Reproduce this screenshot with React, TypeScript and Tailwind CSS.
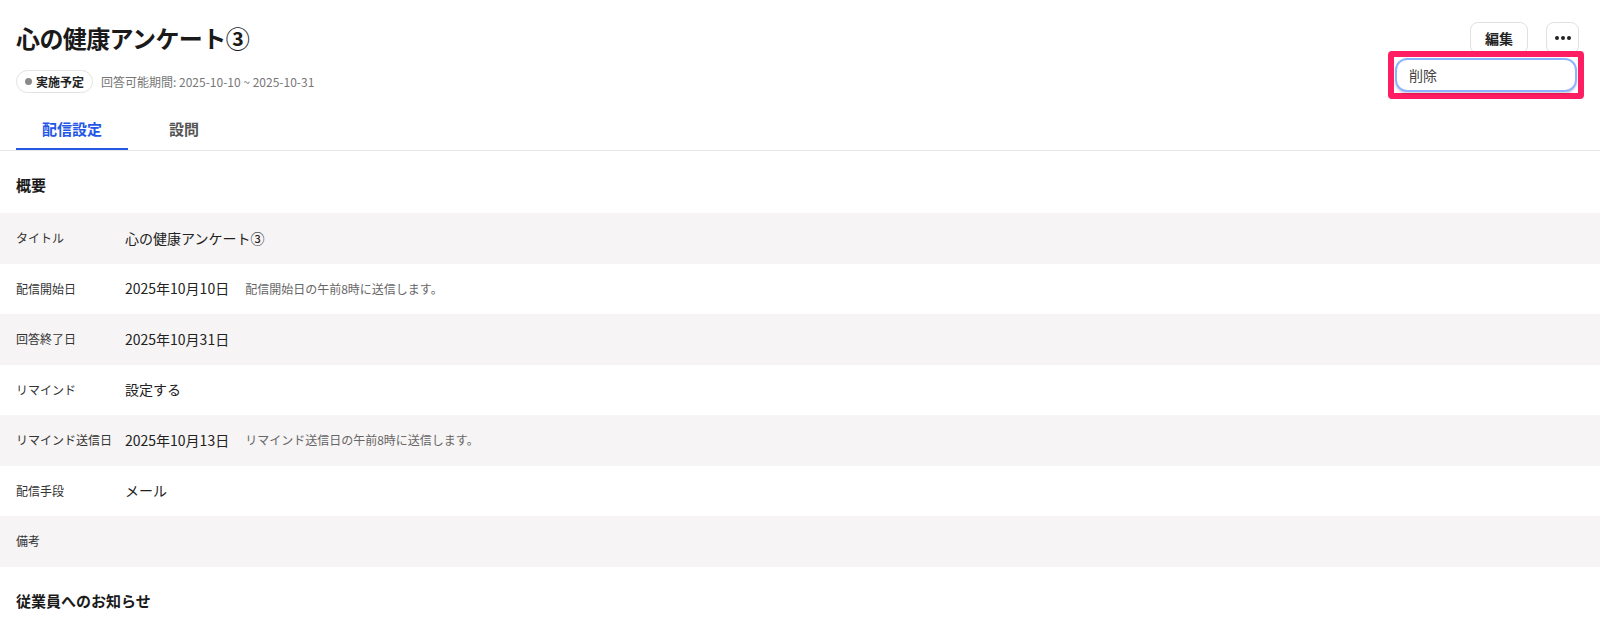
import React from 'react';

const rows: { label: string; value?: string; note?: string }[] = [
  { label: 'タイトル', value: '心の健康アンケート③' },
  { label: '配信開始日', value: '2025年10月10日', note: '配信開始日の午前8時に送信します。' },
  { label: '回答終了日', value: '2025年10月31日' },
  { label: 'リマインド', value: '設定する' },
  { label: 'リマインド送信日', value: '2025年10月13日', note: 'リマインド送信日の午前8時に送信します。' },
  { label: '配信手段', value: 'メール' },
  { label: '備考' },
];

export default function App() {
  return (
    <div className="relative min-h-[617px] bg-white text-[#222] font-['Noto_Sans_CJK_JP','Noto_Sans',sans-serif]">
      {/* Header */}
      <div className="flex justify-between px-4 pt-[22px]">
        <div>
          <h1 className="text-[24px] leading-8 font-bold tracking-tight text-[#1a1a1a]">心の健康アンケート③</h1>
          <div className="mt-[16px] flex items-center gap-2">
            <span className="flex h-[23px] items-center gap-1 rounded-full border border-[#e2e2e2] px-2 text-[12px] font-bold text-[#222]">
              <span className="h-[7px] w-[7px] rounded-full bg-[#8a8a8a]" />
              実施予定
            </span>
            <span className="text-[12px] text-[#777]">回答可能期間: 2025-10-10 ~ 2025-10-31</span>
          </div>
        </div>
        <div className="flex gap-[18px] pr-[5px]">
          <button className="h-8 w-[58px] rounded-lg border border-[#e0e0e0] bg-white text-[14px] font-bold text-[#222]">編集</button>
          <button className="flex h-8 w-[33px] items-center justify-center gap-[2px] rounded-lg border border-[#e0e0e0] bg-white">
            <span className="h-[4px] w-[4px] rounded-full bg-[#222]" />
            <span className="h-[4px] w-[4px] rounded-full bg-[#222]" />
            <span className="h-[4px] w-[4px] rounded-full bg-[#222]" />
          </button>
        </div>
      </div>

      {/* Dropdown */}
      <div className="absolute left-[1388px] top-[51px] w-[196px] rounded-[4px] border-[6px] border-[#ff1e62] bg-white p-[1px]">
        <div className="flex h-[34px] items-center rounded-[12px] border-2 border-[#8fb4ff] bg-white pl-[12px] text-[14px] text-[#444] shadow-[0_2px_2px_rgba(0,0,0,0.15)]">
          削除
        </div>
      </div>

      {/* Tabs */}
      <div className="mt-[23px] flex border-b border-[#e8e8e8] px-4">
        <div className="flex h-[34px] w-28 items-start justify-center border-b-2 border-[#2457e6] pt-[2px] text-[15px] font-bold text-[#2457e6]">配信設定</div>
        <div className="flex h-[34px] w-28 items-start justify-center pt-[2px] text-[15px] font-bold text-[#555]">設問</div>
      </div>

      {/* Overview */}
      <h2 className="px-4 pt-[22px] pb-[16px] text-[15px] font-bold leading-6 text-[#1a1a1a]">概要</h2>
      <div>
        {rows.map((r, i) => (
          <div key={r.label} className={`flex h-[50.5px] items-center px-4 ${i % 2 === 0 ? 'bg-[#f6f4f4]' : 'bg-white'}`}>
            <div className="w-[109px] text-[12px] text-[#333]">{r.label}</div>
            {r.value && <div className="text-[14px] text-[#222]">{r.value}</div>}
            {r.note && <div className="ml-[16px] text-[12px] text-[#666]">{r.note}</div>}
          </div>
        ))}
      </div>

      <h2 className="px-4 pt-[22px] text-[15px] font-bold leading-6 text-[#1a1a1a]">従業員へのお知らせ</h2>
    </div>
  );
}
